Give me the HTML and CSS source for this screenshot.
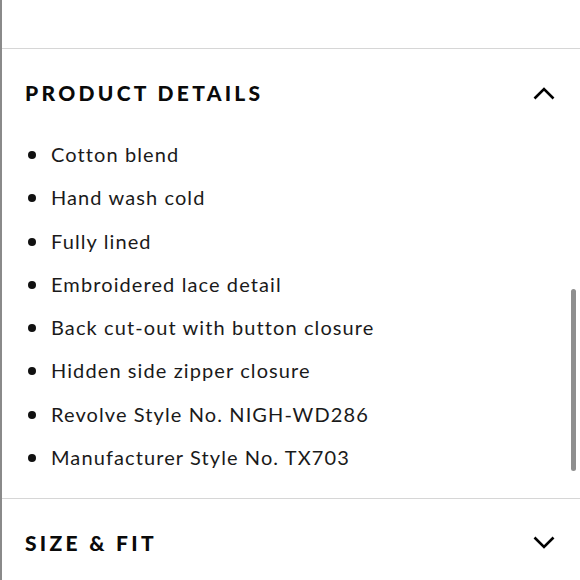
FILE: index.html
```html
<!DOCTYPE html>
<html>
<head>
<meta charset="utf-8">
<link rel="stylesheet" href="styles.css">
</head>
<body>
<div class="page">
  <div class="top"></div>
  <section class="panel open">
    <div class="panel-head">
      <h2 class="panel-title">PRODUCT DETAILS</h2>
      <svg class="chev" width="22" height="14" viewBox="0 0 22 14"><polyline points="1.5,12.5 11,3 20.5,12.5" fill="none" stroke="#000" stroke-width="2.6"/></svg>
    </div>
    <ul class="details">
      <li>Cotton blend</li>
      <li>Hand wash cold</li>
      <li>Fully lined</li>
      <li>Embroidered lace detail</li>
      <li>Back cut-out with button closure</li>
      <li>Hidden side zipper closure</li>
      <li>Revolve Style No. NIGH-WD286</li>
      <li>Manufacturer Style No. TX703</li>
    </ul>
  </section>
  <section class="panel">
    <div class="panel-head">
      <h2 class="panel-title">SIZE &amp; FIT</h2>
      <svg class="chev" width="22" height="14" viewBox="0 0 22 14"><polyline points="1.5,1.5 11,11 20.5,1.5" fill="none" stroke="#000" stroke-width="2.6"/></svg>
    </div>
  </section>
  <div class="scrollbar"></div>
</div>
</body>
</html>
```

FILE: styles.css
```css
html, body {
  margin: 0;
  padding: 0;
  background: #fff;
}
.page {
  position: relative;
  width: 580px;
  height: 580px;
  overflow: hidden;
  box-sizing: border-box;
  border-left: 2px solid #8a8a8a;
  font-family: Lato, "Liberation Sans", sans-serif;
  color: #111;
}
.top {
  height: 48px;
  border-bottom: 1px solid #d6d6d6;
}
.panel {
  padding: 33px 23px 0 23px;
}
.panel.open {
  padding-bottom: 19px;
  border-bottom: 1px solid #d6d6d6;
}
.panel-head {
  display: flex;
  align-items: center;
  justify-content: space-between;
  height: 22px;
}
.panel-title {
  margin: 0;
  font-size: 21px;
  font-weight: 900;
  letter-spacing: 3.3px;
  line-height: 22px;
  color: #0a0a0a;
}
.chev {
  display: block;
  margin-right: 2px;
}
.details {
  list-style: none;
  margin: 29px 0 0 0;
  padding: 0;
}
.details li {
  position: relative;
  height: 43.3px;
  line-height: 43.3px;
  padding-left: 26px;
  font-size: 20px;
  letter-spacing: 1.1px;
  color: #1a1a1a;
}
.details li::before {
  content: "";
  position: absolute;
  left: 3px;
  top: 18px;
  width: 8px;
  height: 8px;
  border-radius: 50%;
  background: #111;
}
.scrollbar {
  position: absolute;
  left: 569px;
  top: 289px;
  width: 5px;
  height: 182px;
  border-radius: 3px;
  background: #8f8f8f;
}
```
